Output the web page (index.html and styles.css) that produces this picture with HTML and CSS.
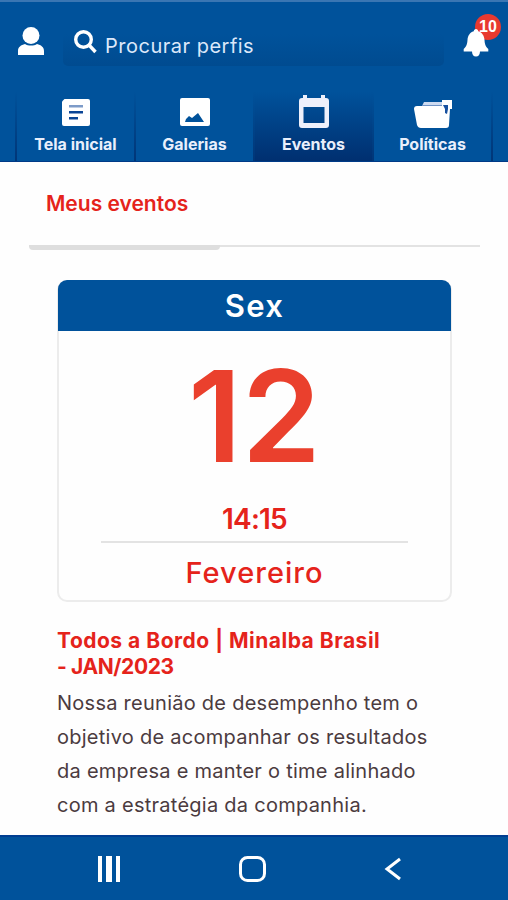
FILE: index.html
```html
<!DOCTYPE html>
<html lang="pt-BR">

<head>
    <meta charset="UTF-8">
    <meta name="viewport" content="width=device-width, initial-scale=1.0">
    <title>Meus eventos</title>
    <link rel="stylesheet" href="styles.css">
</head>

<body>
    <div class="header">
        <div class="top">
            <svg class="user" width="28" height="30" viewBox="0 0 28 30">
                <circle cx="14" cy="8.500" r="8.500" />
                <path d="M1 28v-4c0-4 3-6 7-7 3 2 9 2 12 0 4 1 7 3 7 7v4z" />
            </svg>
            <div class="search">
                <svg width="24" height="24" viewBox="0 0 24 24">
                    <circle cx="9.500" cy="9.500" r="7.800" />
                    <path d="M15 15l6.500 7" />
                </svg>
                <span>Procurar perfis</span>
            </div>
            <div class="bell">
                <span class="badge">10</span>
                <svg width="26" height="28" viewBox="0 0 26 28">
                    <path d="M13 0c-1.500 0-2 1-2.200 2.200C6.500 3.500 4.800 7 4.500 11c-.3 4-.8 6-3.800 9v2.500h24.600V20c-3-3-3.500-5-3.800-9-.3-4-2-7.500-6.300-8.800C15 1 14.500 0 13 0zM9 22.500h8c0 3-1.500 5-4 5s-4-2-4-5z" />
                </svg>
            </div>
        </div>
        <ul class="tabs">
            <li>
                <svg width="28" height="27" viewBox="0 0 28 27">
                    <path fill="#fff" d="M2.500 0H26q2 0 2 2v23q0 2-2 2H2q-2 0-2-2V2.500z" />
                    <path fill="#7d9bc8" d="M7 6h14v2.500H7z" />
                    <path fill="#0a4596" d="M7 12h14v2.500H7zM7 18h9v2.500H7z" />
                </svg>
                <span>Tela inicial</span>
            </li>
            <li>
                <svg width="30" height="28" viewBox="0 0 30 28">
                    <rect width="30" height="28" rx="2" fill="#fff" />
                    <path fill="#00529b" d="M5 24l1-3 3-3 3 2 6-5 6 9z" />
                </svg>
                <span>Galerias</span>
            </li>
            <li class="active">
                <svg width="30" height="33" viewBox="0 0 30 33">
                    <path fill="#eef0fb" fill-rule="evenodd" d="M4 0h4v3h14V0h4v3h1q3 0 3 3v24q0 3-3 3H3q-3 0-3-3V6q0-3 3-3h1zM4.500 12v16h21V12z" />
                </svg>
                <span>Eventos</span>
            </li>
            <li>
                <svg width="40" height="28" viewBox="0 0 40 28">
                    <path fill="#cddaf0" d="M11 2h19v6H8z" />
                    <path fill="#fff" d="M29 0h10v9h-2l-1 16q0 3-3 3H8q-3 0-4-3L1 9q0-3 3-3h25z" />
                    <path fill="none" stroke="#6f92c5" d="M9 5.500h20" />
                    <path fill="#17509f" d="M30 5h5v4l-1 5-2-1V9z" />
                </svg>
                <span>Políticas</span>
            </li>
        </ul>
    </div>

    <div class="main">
        <div class="title"><h1>Meus eventos</h1></div>
        <div class="line"></div>
        <div class="card">
            <div class="week">Sex</div>
            <div class="day">12</div>
            <div class="time">14:15</div>
            <div class="month">Fevereiro</div>
        </div>
        <div class="info">
            <h2>Todos a Bordo | Minalba Brasil<br><span>- JAN/2023</span></h2>
            <p>Nossa reunião de desempenho tem o<br>objetivo de acompanhar os resultados<br>da empresa e manter o time alinhado<br>com a estratégia da companhia.</p>
        </div>
    </div>

    <div class="footer">
        <svg width="24" height="26" viewBox="0 0 24 26">
            <path fill="#fff" d="M1 0h4v26H1zM9 0h6v26H9zM19 0h4v26h-4z" />
        </svg>
        <svg width="28" height="26" viewBox="0 0 28 26">
            <rect x="1.500" y="1.500" width="24" height="23" rx="7" fill="none" stroke="#fff" stroke-width="3" />
        </svg>
        <svg width="18" height="24" viewBox="0 0 18 24">
            <path fill="none" stroke="#fff" stroke-width="3" d="M16 2L3 12l13 10" />
        </svg>
    </div>
</body>

</html>
```
FILE: styles.css
```css
* {
    margin: 0;
    padding: 0;
    list-style: none;
    box-sizing: border-box;
}

body {
    width: 508px;
    height: 900px;
    display: flex;
    flex-direction: column;
    overflow: hidden;
    background-color: #fefefe;
    font-family: Inter, "Liberation Sans", sans-serif;
}

.header {
    height: 162px;
    background-color: #00529b;
    border-top: 2px solid #3a76b3;
    border-bottom: 1px solid #003a87;
}

.top {
    height: 90px;
    display: flex;
    align-items: flex-start;
    padding: 24px 15px 0 17px;
}

.user {
    margin-top: 1px;
    fill: #fff;
}

.search {
    width: 381px;
    height: 40px;
    margin-left: 18px;
    padding-left: 11px;
    display: flex;
    align-items: center;
    border-radius: 5px;
    background: linear-gradient(#00529b 20%, #004b90);
    color: #dce8fa;
    font-size: 20px;
    letter-spacing: 0.5px;
}

.search svg {
    margin: -8px 7px 0 0;
    fill: none;
    stroke: #fff;
    stroke-width: 3.4;
}

.bell {
    margin: 3px 0 0 19px;
    position: relative;
}

.bell svg {
    position: relative;
    display: block;
    fill: #fff;
}

.badge {
    position: absolute;
    left: 12px;
    top: -15px;
    width: 26px;
    height: 26px;
    border-radius: 50%;
    background-color: #e8392f;
    color: #fff;
    font: bold 16px/26px "Liberation Sans", sans-serif;
    text-align: center;
}

.tabs {
    height: 69px;
    padding: 0 15px;
    display: flex;
}

.tabs li {
    flex: 1;
    height: 69px;
    display: flex;
    flex-direction: column;
    align-items: center;
    justify-content: flex-end;
    padding-bottom: 7px;
    border-left: 2px solid;
    border-image: linear-gradient(#00529b, #003577) 1;
    color: #e9effb;
    font-size: 16px;
    font-weight: 700;
    line-height: 20px;
}

.tabs svg {
    margin-bottom: 8px;
}

.tabs li:nth-child(3) svg,
.tabs li:nth-child(4) svg {
    margin-bottom: 6px;
}

.tabs li:last-child {
    border-right: 2px solid;
}

.tabs .active {
    background: linear-gradient(#00529b, #002f70);
}

.main {
    flex: 1;
}

.title {
    height: 83px;
    padding: 28px 0 0 46px;
}

h1 {
    color: #e5231b;
    font-size: 21px;
    font-weight: 600;
    line-height: 28px;
}

.line {
    width: 451px;
    height: 5px;
    margin-left: 29px;
    border-top: 2px solid #e3e3e3;
}

.line::before {
    content: "";
    display: block;
    width: 191px;
    height: 5px;
    margin-top: -2px;
    border-radius: 0 0 4px 4px;
    background-color: #dedede;
}

.card {
    width: 395px;
    height: 322px;
    margin: 30px 0 0 57px;
    border: 2px solid #ececec;
    border-radius: 10px;
    color: #e5231b;
    text-align: center;
}

.week {
    height: 51px;
    margin: -2px -1px 0;
    border-radius: 9px 9px 0 0;
    background-color: #00529b;
    color: #fff;
    font-size: 31px;
    font-weight: 600;
    line-height: 51px;
    letter-spacing: 1.3px;
}

.day {
    height: 172px;
    color: #ea402d;
    font-size: 127px;
    font-weight: 600;
    line-height: 171px;
}

.time {
    width: 307px;
    height: 40px;
    margin: 0 auto;
    border-bottom: 2px solid #e3e3e3;
    font-size: 28px;
    font-weight: 600;
    line-height: 32px;
    letter-spacing: -0.8px;
}

.month {
    font-size: 29px;
    font-weight: 500;
    line-height: 60px;
    letter-spacing: 1px;
}

.info {
    padding: 26px 0 0 57px;
    white-space: nowrap;
}

h2 {
    color: #e5231b;
    font-size: 21px;
    font-weight: 700;
    line-height: 26px;
    letter-spacing: 0.5px;
}

h2 span {
    letter-spacing: -0.4px;
}

p {
    margin-top: 6px;
    color: #4b3b3f;
    font-size: 20px;
    line-height: 34px;
    letter-spacing: 0.26px;
}

.footer {
    height: 65px;
    padding: 0 106px 0 97px;
    display: flex;
    align-items: center;
    justify-content: space-between;
    background-color: #00529b;
    border-top: 2px solid #003e91;
}
```
